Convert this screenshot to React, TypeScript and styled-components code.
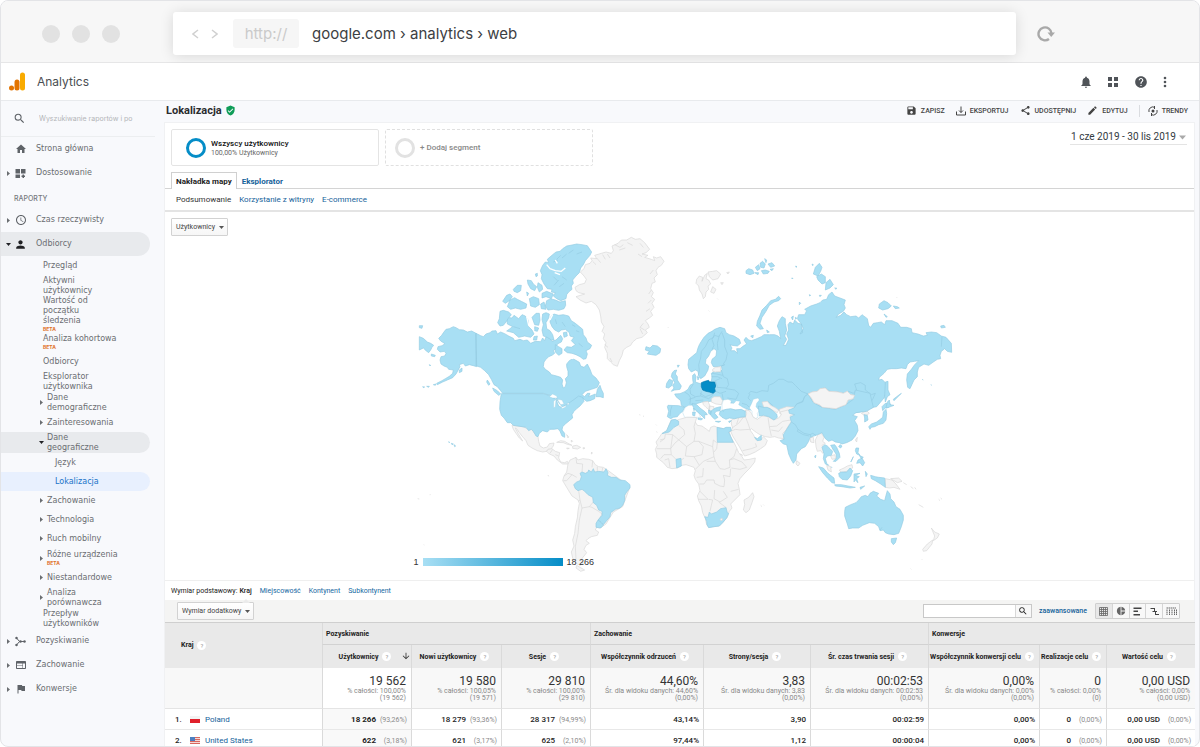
import React from "react";
import styled, { createGlobalStyle } from "styled-components";
import {
  MdNotifications, MdHelp, MdSave, MdShare, MdEdit, MdHome, MdPerson, MdSchedule,
  MdFlag, MdWeb, MdSearch, MdVerifiedUser, MdArrowDownward, MdPieChart,
} from "react-icons/md";

const SANS = `Inter, "Liberation Sans", sans-serif`;
const NAV = `"DejaVu Sans", "Liberation Sans", sans-serif`;
const ROBOTO = `Roboto, "Liberation Sans", sans-serif`;

const GlobalStyle = createGlobalStyle`
  * { box-sizing: border-box; }
  body { margin: 0; background: #fff; font-family: ${ROBOTO}; font-size: 8px; color: #222; }
  button, input { font: inherit; color: inherit; margin: 0; padding: 0; border: 0; background: none; }
  a { color: #15629a; text-decoration: none; }
  ul { list-style: none; margin: 0; padding: 0; }
  svg { display: block; flex: none; }
`;

const Window = styled.div`
  display: flex;
  flex-direction: column;
  height: 100vh;
  border: 1px solid #e3e4e7;
  border-radius: 8px;
  overflow: hidden;
  background: #f8f9fc;
`;

/* Browser bar */
const BrowserBar = styled.header`
  display: flex;
  align-items: center;
  flex: none;
  height: 62px;
  padding: 4px 144px 0 41px;
  background: #f7f7f7;
  border-bottom: 1px solid #e6e6e7;
`;
const Dots = styled.div`
  display: flex;
  gap: 12px;
  width: 131px;
`;
const Dot = styled.span`
  width: 18px;
  height: 18px;
  border-radius: 50%;
  background: #e2e2e2;
`;
const AddressBar = styled.div`
  flex: 1;
  display: flex;
  align-items: center;
  height: 43px;
  background: #fff;
  border-radius: 3px;
  box-shadow: 0 1px 14px rgba(0, 0, 0, 0.13);
  font-family: ${SANS};
  font-size: 15px;
`;
const Arrows = styled.div`
  display: flex;
  gap: 12px;
  padding: 0 15px 0 19px;
  color: #d0d0d0;
`;
const Scheme = styled.span`
  width: 66px;
  line-height: 29px;
  margin-right: 13px;
  border-radius: 3px;
  background: #f6f6f6;
  color: #cacaca;
  text-align: center;
`;
const Address = styled.span`
  color: #3c4043;
`;
const Reload = styled.button`
  margin-left: 21px;
  color: #a9a9a9;
`;

/* Product bar */
const ProductBar = styled.div`
  display: flex;
  align-items: center;
  flex: none;
  height: 38px;
  padding: 0 32px 0 8px;
  background: #fff;
  border-bottom: 1px solid #e8eaed;
  color: #5f6368;
`;
const ProductName = styled.span`
  flex: 1;
  margin-left: 11px;
  font-family: ${SANS};
  font-size: 12px;
  color: #4a4e52;
`;
const HeaderIcons = styled.div`
  display: flex;
  align-items: center;
  gap: 15px;
  color: #505459;
`;

const Columns = styled.div`
  display: flex;
  flex: 1;
  min-height: 0;
`;

/* Side navigation */
const Sidebar = styled.nav`
  flex: none;
  width: 163px;
  font-family: ${NAV};
  font-size: 8px;
  line-height: 10px;
  color: #6a6d71;
`;
const SearchBox = styled.label`
  display: flex;
  align-items: center;
  gap: 13px;
  width: 154px;
  height: 36px;
  padding-left: 12px;
  border-bottom: 1px solid #eceef0;
  color: #5f6368;
`;
const SearchInput = styled.input`
  width: 104px;
  font-family: ${SANS};
  font-size: 7px;
  outline: 0;
  &::placeholder { color: #b3b5b8; opacity: 1; }
`;
const MainItem = styled.a<{ $open?: boolean }>`
  display: flex;
  align-items: center;
  width: 149px;
  height: 24px;
  padding-left: 5px;
  border-radius: 0 12px 12px 0;
  background: ${(p) => (p.$open ? "#e8eaed" : "transparent")};
  color: #6a6d71;
`;
const MainIcon = styled.span<{ $open?: boolean }>`
  display: grid;
  place-items: center;
  width: 13px;
  margin: 0 9px 0 3px;
  color: ${(p) => (p.$open ? "#202124" : "#5f6368")};
`;
const SectionTitle = styled.div`
  padding: 9px 0 4px 13px;
  font-family: ${SANS};
  font-size: 7px;
  font-weight: 500;
  color: #777a7e;
`;
const subHeights = { one: 19, beta: 20, two: 21, long: 36 };
const SubItem = styled.a<{ $size: keyof typeof subHeights; $level: number; $state?: "open" | "active" }>`
  display: flex;
  align-items: center;
  gap: 3px;
  width: 149px;
  height: ${(p) => subHeights[p.$size]}px;
  padding-left: ${(p) => [42, 38, 54][p.$level]}px;
  border-radius: 0 11px 11px 0;
  background: ${(p) => (p.$state === "open" ? "#e8eaed" : p.$state === "active" ? "#e8f0fe" : "transparent")};
  color: ${(p) => (p.$state === "active" ? "#1a73c8" : "#6a6d71")};
  white-space: nowrap;
`;
const Beta = styled.small`
  display: block;
  font-family: ${SANS};
  font-size: 5px;
  line-height: 6px;
  font-weight: 700;
  color: #e0702a;
`;

/* Report */
const Report = styled.main`
  flex: 1;
  min-width: 0;
  margin-right: 4px;
  display: flex;
  flex-direction: column;
`;
const TitleBar = styled.div`
  display: flex;
  align-items: center;
  justify-content: space-between;
  flex: none;
  height: 22px;
  padding: 0 7px 2px 2px;
  border-bottom: 1px solid #f0f1f3;
`;
const Title = styled.h1`
  display: flex;
  align-items: center;
  gap: 3px;
  margin: 0;
  font-size: 11px;
  font-weight: 700;
  color: #2b2d30;
  svg { color: #0f9d58; }
`;
const Actions = styled.div`
  display: flex;
  align-items: center;
  gap: 11px;
`;
const Action = styled.button<{ $divided?: boolean }>`
  display: flex;
  align-items: center;
  gap: 4px;
  height: 12px;
  padding-left: ${(p) => (p.$divided ? 8 : 0)}px;
  border-left: ${(p) => (p.$divided ? "1px solid #dadce0" : "0")};
  font-size: 7px;
  font-weight: 500;
  color: #444;
`;
const Sheet = styled.div`
  flex: 1;
  display: flex;
  flex-direction: column;
  background: #fff;
  border-left: 1px solid #f0f1f3;
  border-right: 1px solid #f0f1f3;
`;
const SegmentRow = styled.div`
  display: flex;
  align-items: flex-start;
  gap: 6px;
  padding: 6px 7px 6px 6px;
`;
const Segment = styled.button<{ $empty?: boolean }>`
  display: flex;
  align-items: center;
  gap: 5px;
  width: 208px;
  height: 37px;
  padding-left: ${(p) => (p.$empty ? 9 : 14)}px;
  border: ${(p) => (p.$empty ? "1px dashed #e0e0e0" : "1px solid #e4e4e4")};
  border-radius: 2px;
  text-align: left;
  font-size: 8px;
  line-height: 10px;
  font-weight: 500;
  color: ${(p) => (p.$empty ? "#888" : "#111")};
  small { display: block; font-size: 7px; line-height: 8px; font-weight: 400; color: #666; }
`;
const Ring = styled.span<{ $color: string }>`
  width: 20px;
  height: 20px;
  border: 3px solid ${(p) => p.$color};
  border-radius: 50%;
`;
const DateRange = styled.button`
  display: flex;
  align-items: center;
  gap: 3px;
  margin-left: auto;
  padding: 1px 1px 0 1px;
  border-bottom: 1px solid #e4e4e4;
  font-size: 10px;
  line-height: 14px;
  color: #333a42;
`;
const Tabs = styled.div`
  display: flex;
  height: 17px;
  padding-left: 6px;
  border-bottom: 1px solid #d4d4d4;
  font-size: 8px;
  font-weight: 700;
`;
const Tab = styled.a<{ $active?: boolean }>`
  height: 17px;
  padding: 0 4px;
  line-height: 17px;
  border: 1px solid ${(p) => (p.$active ? "#d0d0d0" : "transparent")};
  border-bottom: 0;
  background: ${(p) => (p.$active ? "#fff" : "transparent")};
  color: ${(p) => (p.$active ? "#222" : "#15629a")};
`;
const SubTabs = styled.div`
  display: flex;
  gap: 8px;
  padding: 1px 0 0 11px;
  line-height: 20px;
  border-bottom: 2px solid #e4e4e4;
  a:first-child { color: #333; }
`;
const MapArea = styled.section`
  display: grid;
  grid-template-columns: 1fr auto 1fr;
  align-items: start;
  padding: 0 6px;
`;
const MenuButton = styled.button`
  display: flex;
  align-items: center;
  gap: 4px;
  padding: 0 3px 0 4px;
  height: 18px;
  border: 1px solid #d2d2d2;
  border-radius: 1px;
  background: linear-gradient(#fff, #f6f6f6);
  font-size: 7px;
  color: #444;
`;
const MapMenu = styled.div`
  padding-top: 6px;
`;
const MapBox = styled.div`
  position: relative;
  padding: 18px 0 5px;
`;
const Legend = styled.div`
  position: absolute;
  left: 14px;
  bottom: 14px;
  display: flex;
  align-items: center;
  gap: 4px;
  font-family: "Liberation Sans", Arial, sans-serif;
  font-size: 9px;
  line-height: 8px;
  color: #333;
`;
const LegendBar = styled.span`
  width: 140px;
  height: 8px;
  background: linear-gradient(90deg, #a8dff4, #058dc7);
`;
const Dimensions = styled.div`
  display: flex;
  align-items: center;
  gap: 8px;
  height: 20px;
  padding-left: 6px;
  border-top: 1px solid #efefef;
  font-size: 7px;
  a { color: #15689f; }
`;
const DimensionName = styled.span`
  display: flex;
  gap: 2px;
`;
const CurrentDimension = styled.b`
  position: relative;
  font-weight: 500;
  &::after {
    content: "";
    position: absolute;
    left: 3px;
    top: 12px;
    border: 4px solid transparent;
    border-top: 0;
    border-bottom-color: #ebebeb;
  }
`;
const TableTools = styled.div`
  display: flex;
  align-items: center;
  height: 22px;
  padding: 0 14px 0 12px;
  background: #f4f4f3;
`;
const Finder = styled.form`
  display: flex;
  margin-left: auto;
  height: 14px;
  border: 1px solid #c8c8c8;
  background: #fff;
  input { width: 91px; outline: 0; }
  button { display: grid; place-items: center; width: 16px; border-left: 1px solid #d8d8d8; background: #f8f8f8; }
`;
const Advanced = styled.a`
  margin: 0 8px 0 7px;
  font-size: 7px;
  font-weight: 500;
`;
const ViewGroup = styled.div`
  display: flex;
  width: 85px;
  height: 16px;
  border: 1px solid #cfcfcf;
  border-radius: 1px;
  background: #f8f8f8;
`;
const ViewButton = styled.button<{ $on?: boolean }>`
  display: grid;
  place-items: center;
  flex: 1;
  background: ${(p) => (p.$on ? "#e8e8e8" : "transparent")};
  color: #666;
  & + & { border-left: 1px solid #d5d5d5; }
`;

/* Data table */
const Table = styled.table`
  width: 100%;
  table-layout: fixed;
  border-collapse: separate;
  border-spacing: 0;
  border-top: 1px solid #cfcfcf;
  font-size: 8px;
  th, td { padding: 0; border-left: 1px solid #dadada; }
  tr > :first-child[data-name] { border-left: 0; }
`;
const GroupHead = styled.th`
  && { padding-left: 3px; }
  height: 22px;
  background: #e9e9e9;
  border-bottom: 1px solid #d2d2d2;
  font-size: 7px;
  text-align: left;
`;
const NameHead = styled(GroupHead)`
  && { padding-left: 16px; }
  border-bottom-color: #e9e9e9;
`;
const MetricHead = styled.th`
  && { padding-right: 4px; }
  position: relative;
  height: 23px;
  background: #e9e9e9;
  font-size: 7px;
  white-space: nowrap;
`;
const HeadLabel = styled.span`
  display: inline-flex;
  align-items: center;
  gap: 4px;
`;
const SortMark = styled.span`
  position: absolute;
  right: 0;
  top: 6px;
  color: #333;
`;
const Hint = styled.span`
  width: 9px;
  height: 9px;
  border-radius: 50%;
  background: #fff;
  font-size: 6px;
  line-height: 9px;
  font-weight: 400;
  text-align: center;
  color: #999;
`;
const TotalCell = styled.td<{ $sorted?: boolean }>`
  && { padding: 6px 5px 5px 0; }
  height: 41px;
  background: ${(p) => (p.$sorted ? "#fff" : "#f8f8f8")};
  border-bottom: 1px solid #e4e4e4;
  text-align: right;
  vertical-align: top;
  font-size: 12px;
  line-height: 14px;
  color: #333;
  white-space: nowrap;
  small { display: block; font-size: 7px; line-height: 7px; color: #888; }
`;
const NameCell = styled.td`
  && { padding-left: 10px; }
  height: 21px;
  border-bottom: 1px solid #e8e8e8;
  background: #fff;
`;
const NameLine = styled.span`
  display: grid;
  grid-template-columns: 15px 10px auto;
  align-items: center;
  font-weight: 500;
  a { margin-left: 5px; font-weight: 400; }
`;
const ValueCell = styled.td<{ $sorted?: boolean }>`
  && { padding-right: 4px; }
  height: 21px;
  background: ${(p) => (p.$sorted ? "#f9f9f9" : "#fff")};
  border-bottom: 1px solid #e8e8e8;
  text-align: right;
  font-weight: ${(p) => (p.$sorted ? 700 : 500)};
  white-space: nowrap;
`;
const Share = styled.span`
  display: inline-block;
  width: 31px;
  font-size: 7px;
  font-weight: 400;
  color: #8a8a8a;
`;

const Caret = ({ dir = "down", size = 5, color = "#555" }: { dir?: "down" | "right"; size?: number; color?: string }) => (
  <svg width={size} height={size} viewBox="0 0 10 10" fill={color}>
    <path d={dir === "down" ? "M0 2H10L5 8Z" : "M2 0V10L8 5Z"} />
  </svg>
);

/* World map, drawn on a grid of three units per pixel. */
const LAND = "#a8dff4";
const LAND_EDGE = "#94cbe2";
const BLANK = "#f4f4f4";
const BLANK_EDGE = "#d8d8d8";

const WorldMap = () => (
  <svg width="560" height="345" viewBox="-30 0 1680 1035" strokeLinejoin="round" strokeWidth="2" role="img" aria-label="Mapa użytkowników według kraju">
    {/* North America */}
    <g fill={LAND} stroke={LAND_EDGE}>
      <path d="M198 310L185 303L172 306L160 300L148 299L138 293L130 290L118 296L108 298L101 307L95 316L86 325L92 333L105 341L96 347L84 350L82 358L90 366L103 364L108 370L104 378L93 380L90 390L93 402L102 408L112 412L116 418L130 420L128 430L118 439L106 446L96 452L80 460L82 464L98 456L112 450L128 443L138 432L150 410L148 404L160 400L166 408L178 404L190 407L200 410Z" />
      <path d="M28 320L40 325L52 336L62 340L71 346L66 352L62 360L56 368L48 362L40 354L28 360ZM28 287L38 287L36 295L28 293ZM64 372L76 376L74 380L64 378ZM70 464L78 462L76 466ZM50 469L58 469L56 472ZM38 470L44 471L40 473ZM58 404L62 406L60 408ZM148 420L156 414L156 424L148 428Z" />
      <path d="M198 310L212 317L220 320L228 312L240 308L246 303L258 302L262 312L272 306L284 311L296 318L310 325L314 332L330 328L340 332L352 330L362 340L376 334L392 335L398 324L404 332L408 320L418 324L426 334L438 330L452 316L458 326L454 336L442 342L438 356L430 362L434 370L426 376L416 380L408 388L402 396L400 410L406 418L418 426L424 434L440 438L452 442L458 450L456 462L460 474L466 470L469 458L466 446L474 438L474 424L470 410L470 402L478 392L488 386L496 390L508 397L512 408L522 412L532 402L540 418L546 434L558 444L568 458L562 472L544 478L526 484L516 494L524 500L532 490L540 490L536 500L556 492L554 506L540 512L530 514L520 506L500 514L486 524L470 532L460 534L448 520L436 502L420 496L400 490L278 490L272 482L262 470L252 464L244 448L236 434L224 422L212 412L200 408Z" />
      <path d="M562 478L570 466L574 478L580 490L580 503L570 500L558 500ZM232 450L240 462L236 466L230 456ZM248 474L262 482L272 492L266 496L252 484Z" />
      <path d="M412 88L428 74L438 66L450 64L458 56L470 48L486 45L500 42L516 44L532 47L545 66L540 76L526 92L520 104L512 114L508 128L498 138L488 150L490 160L484 168L486 178L476 186L470 194L468 206L452 212L440 206L430 198L436 188L424 186L426 178L412 176L402 162L394 146L396 134L391 122L398 106L406 96L416 98Z" />
      <path d="M410 212L422 206L436 210L450 216L466 212L467 226L462 236L446 241L430 238L414 240L406 228Z" />
      <path d="M424 258L432 252L446 256L460 254L476 258L484 272L496 280L506 288L518 298L520 314L528 324L532 336L545 346L540 356L528 362L532 372L528 386L520 388L510 380L498 374L486 370L472 368L462 360L470 350L484 352L496 344L484 332L492 322L480 318L478 308L466 298L454 300L446 306L434 300L426 290L420 276Z" />
      <path d="M290 262L306 264L312 256L326 266L336 254L346 258L354 270L356 290L366 300L372 312L362 322L344 318L326 322L310 308L290 303L300 296L308 290L292 282Z" />
      <path d="M270 244L280 241L296 246L304 254L294 266L288 276L280 286L270 288L263 278L268 266Z" />
      <path d="M300 210L314 203L322 208L334 214L350 222L348 234L332 238L316 234L302 238L292 230ZM278 214L290 196L300 192L307 200L298 212L286 220ZM310 178L322 166L334 166L332 182L322 188L312 184ZM352 150L364 152L370 162L380 170L374 182L362 176L354 162ZM384 158L396 166L398 178L388 186L382 172ZM396 190L410 184L430 192L424 206L408 200L396 204ZM358 206L370 200L386 206L388 224L376 232L362 228ZM392 222L402 216L408 238L394 236ZM376 132L382 130L382 138L378 140ZM350 186L356 190L352 198Z" />
      <path d="M398 252L408 248L418 252L416 264L408 278L410 296L420 302L428 314L432 330L424 330L412 322L400 318L396 300L400 284L396 268ZM366 262L378 250L388 250L390 270L386 286L374 284ZM374 290L386 294L382 304L374 302ZM436 344L446 350L456 356L456 370L446 376L436 366ZM460 308L470 306L472 318L462 322ZM372 320L382 318L380 330L370 330Z" />
      <path d="M708 350L720 354L728 346L742 348L752 356L750 368L738 376L724 374L712 372L718 364L706 360Z" />
    </g>
    <g stroke={LAND_EDGE} fill="none">
      <path d="M198 310V408M430 96L444 90M440 88L452 76M456 84L470 72M476 70L490 60M500 72L516 66M430 140L442 152M446 150L432 166M448 170L462 160M470 150L456 140M486 284L496 290M498 302L508 306M310 290L330 296M440 282L436 268M456 276L466 290M506 340L518 350" />
    </g>
    <g fill="none" stroke="#fff" strokeWidth="4">
      <path d="M410 104L420 116L436 122L454 124L466 114M434 128L450 134M442 100L436 90M350 260L356 286L372 300M428 254L420 270M466 380L490 386" />
    </g>
    <path fill={BLANK} stroke={BLANK_EDGE} d="M495 172L508 164L524 160L529 148L522 138L511 126L522 116L526 104L540 100L546 92L542 84L560 86L554 76L574 70L588 66L604 70L610 62L606 48L624 40L634 30L650 30L664 22L676 28L690 26L704 38L710 46L719 58L708 68L696 72L714 76L704 82L724 88L734 92L730 80L740 84L752 80L762 94L754 106L744 112L738 122L742 134L732 144L736 156L726 160L722 176L730 188L724 200L734 208L726 220L732 232L722 244L728 256L718 264L706 272L714 282L718 292L706 300L712 308L696 322L680 326L668 336L662 346L650 352L640 360L636 376L628 392L622 409L610 404L602 396L592 386L592 370L584 352L588 338L580 326L584 312L576 304L582 290L574 276L572 258L568 240L558 224L544 214L528 219L510 210L498 200L524 192L506 188L498 182Z" />
    <path fill="none" stroke={BLANK_EDGE} d="M548 94L558 104M560 84L572 98M578 74L586 88M592 72L600 84M614 44L630 52L640 44M628 60L646 54M652 38L668 46M690 40L700 52M684 72L696 80M730 120L720 132M724 210L714 220M700 280L690 292L704 300M690 296L698 312M724 180L716 192M720 236L708 244M584 344L594 352M600 384L606 396" />

    {/* Central and South America, United States */}
    <g transform="translate(-30 480)">
      <g fill={BLANK} stroke={BLANK_EDGE}>
        <path d="M336 106L368 110L382 116L394 118L404 130L414 140L416 154L420 168L430 174L442 171L448 161L462 159L460 168L452 178L444 178L440 184L428 186L412 182L396 174L384 166L378 152L366 138L358 128L350 116L346 114L354 130L364 146L368 153L358 144L348 130L340 118Z" />
        <path d="M444 178L456 176L466 184L479 188L476 204L482 216L494 218L502 214L506 222L498 222L488 222L472 210L462 198L448 192L440 184ZM470 157L482 152L494 154L504 160L516 166L502 163L490 158ZM518 168L530 166L542 172L532 177L518 175ZM500 174L508 175L502 177ZM549 173L555 174L550 177ZM500 134L506 140L504 144ZM514 150L518 154L514 156ZM575 186L577 190L574 192Z" />
        <path d="M504 222L510 210L528 202L534 210L548 206L566 208L578 212L586 224L596 230L610 232L622 240L690 290L668 350L640 366L618 402L600 414L590 412L586 420L596 426L592 436L574 440L564 446L558 452L568 460L558 466L552 478L560 488L552 498L544 508L550 520L540 526L528 520L518 504L514 486L522 468L518 450L524 430L526 410L532 384L534 362L538 340L534 330L516 318L506 302L494 282L488 272L492 258L500 246L502 234ZM530 526L540 532L554 540L542 544L528 534Z" />
        <path fill="none" d="M528 202L530 220L548 222L546 246M578 212L576 232M592 230L592 244M608 234L606 244M492 258L504 250L516 254L500 272L490 272M516 254L530 262M524 292L536 302L540 330L546 354L568 350L580 336M568 350L576 352L596 364L606 372M546 354L538 390L534 430L526 470L528 508M606 372L596 390M458 178L450 190M466 194L476 198M540 330L534 334" />
      </g>
      <g fill={LAND} stroke={LAND_EDGE}>
        <path d="M304 11L430 11L446 16L454 20L468 28L476 48L484 52L500 44L520 30L536 18L548 22L552 34L540 48L530 56L522 64L516 74L518 84L508 92L496 102L488 110L486 120L494 130L494 142L486 138L480 124L474 116L462 118L450 118L442 126L428 122L418 130L414 140L408 138L400 124L394 118L386 122L378 112L366 110L340 106L332 98L322 98L312 84L304 76L299 58L300 36L302 22Z" />
        <path d="M540 250L546 246L556 250L564 246L566 240L574 246L580 236L584 246L596 244L612 246L618 236L624 248L622 256L634 262L648 262L660 270L676 272L690 284L690 294L680 306L674 316L674 332L668 346L660 354L646 358L632 368L630 380L620 392L610 404L604 398L594 390L606 376L606 364L596 360L590 346L580 338L578 322L564 314L552 302L546 298L534 302L526 296L521 284L530 276L540 272L544 260Z" />
        <path d="M594 390L604 398L610 406L602 414L588 412L588 400ZM162 164L167 168L164 170ZM154 160L160 162L156 164ZM146 155L149 157L147 158Z" />
      </g>
      <path fill="#fff" stroke={LAND_EDGE} strokeWidth="1" d="M448 20L458 12L470 18L472 24L458 24ZM461 34L468 28L466 50L461 54ZM472 28L486 30L492 42L482 44ZM484 52L500 46L496 52L486 56ZM498 42L508 38L506 44Z" />
      <path fill="none" stroke={BLANK_EDGE} d="M444 255L446 259M53 326L58 327M89 314L92 314M71 464L73 465M718 74L721 75M729 78L732 79M768 104L770 106M769 125L772 127" />
    </g>

    <g transform="translate(690 0)">
      {/* Eurasia, northern part */}
      <g fill={LAND} stroke={LAND_EDGE}>
        <path d="M144 404L146 388L158 378L170 368L174 354L178 344L184 334L192 322L204 310L216 304L224 298L240 292L254 296L258 308L268 314L282 318L298 328L302 340L292 348L276 346L270 344L276 354L272 362L284 362L292 370L290 356L300 356L310 348L320 342L312 330L318 322L326 330L334 332L346 328L364 320L372 314L388 314L404 314L414 318L422 326L418 304L412 288L418 272L426 260L436 266L436 280L440 300L434 318L440 328L430 346L438 346L446 328L440 312L446 300L444 284L450 276L460 282L464 270L474 280L484 282L488 308L480 312L490 296L484 282L472 266L476 254L494 254L500 242L494 238L512 228L530 222L540 218L548 210L560 208L566 194L576 186L584 198L600 204L616 210L612 224L616 234L610 244L596 252L588 262L602 256L612 246L620 254L632 260L648 258L656 264L666 254L682 266L686 286L692 292L700 280L712 278L724 276L734 284L738 272L756 272L774 280L782 292L800 292L814 296L816 308L834 312L850 318L862 316L858 308L874 306L890 308L904 318L918 322L934 340L935 367L922 364L914 356L904 364L900 376L902 386L892 388L880 396L866 406L852 402L836 412L832 426L832 440L822 450L810 476L803 472L800 450L802 432L814 418L824 404L836 392L824 394L810 396L802 404L798 416L784 414L770 416L754 416L742 418L732 430L718 442L716 450L726 448L736 458L742 470L738 490L732 504L722 516L710 530L700 532L660 546L560 556L470 544L440 544L400 536L366 536L330 540L304 532L290 524L246 510L212 514L186 516L160 524L134 532L124 526L122 512L108 500L104 492L120 491L134 485L144 478L150 466L160 460L158 448L158 436L164 431L168 440L166 456L184 462L200 456L214 454L216 440L214 430L224 424L240 428L246 418L244 408L254 404L236 410L220 410L214 398L216 388L228 378L230 362L222 356L212 364L206 378L198 388L196 400L206 408L204 420L194 438L182 446L176 436L174 424L166 420L154 426L146 416Z" />
        <path d="M82 530L84 526L116 527L134 532L128 544L118 552L112 560L100 562L92 566L82 560L86 544Z" />
        <path d="M350 288L352 274L360 256L366 240L380 226L392 212L406 208L416 199L422 206L416 212L402 216L388 226L378 244L366 262L360 280L370 296L360 298ZM380 300L388 306L382 308ZM332 318L340 316L338 324Z" />
        <path d="M520 132L526 112L538 100L546 112L542 124L534 138ZM530 140L544 132L556 140L556 158L546 162L534 150ZM558 158L570 148L580 164L570 174L556 180ZM584 174L590 174L588 178ZM516 102L520 104L518 107ZM467 108L471 110L468 112ZM455 144L459 145L457 147ZM538 196L544 196L540 200ZM508 194L512 196L509 198ZM478 216L482 220L478 224Z" />
        <path d="M318 122L326 116L338 120L342 130L330 134L318 130ZM346 112L356 104L360 116L352 122ZM360 100L368 94L376 102L372 114L362 112ZM374 86L380 90L378 98ZM384 102L396 98L404 108L392 112ZM344 128L356 128L354 134ZM364 122L376 120L388 124L384 130L370 132ZM390 118L400 116L396 122Z" />
        <path d="M718 222L732 212L744 218L754 228L744 236L728 240L716 234ZM760 228L772 230L778 234L766 236ZM732 252L742 260L738 262ZM902 288L912 286L916 292L904 294ZM454 262L460 258L458 270ZM466 262L470 264L467 268Z" />
        <path d="M96 430L102 422L110 420L106 432L112 440L112 450L120 462L124 468L120 478L104 480L94 484L102 474L98 466L104 458L98 446L94 440ZM80 460L88 448L98 452L96 466L86 474L78 472ZM112 406L118 406L114 412ZM172 440L178 442L174 450Z" />
        <path d="M736 456L744 454L744 480L750 494L742 500L736 516L734 500ZM760 508L770 500L784 490L782 492L762 512ZM736 520L752 522L746 532L736 534L728 542L726 530ZM846 448L850 450M872 464L876 466" />
      </g>
      <g fill="none" stroke={LAND_EDGE}>
        <path d="M174 440L178 422L176 404L182 384L184 364L196 350L206 330L220 322L224 308M216 358L222 346L216 328L224 316L236 320L246 304M234 360L232 340L238 316M246 308L254 330L254 350L262 370L258 390L250 402M244 420L250 440L262 446L266 464L258 476L284 480L296 490L288 508L262 504M214 440L232 440L246 446M216 430L230 432L248 436M226 452L240 446M230 472L258 474M228 484L240 490L258 484M226 452L232 470M246 490L250 510M160 462L150 478L152 492L166 500L182 498L184 484M134 486L146 494L152 504L150 520L156 526M146 508L166 502M180 490L196 500L220 492M182 498L206 506L218 496M166 512L190 510M326 492L332 484L350 488L366 482L384 484L386 466L400 460L416 448L430 448L444 456L456 456L466 466L484 484L504 492L494 500L488 514L470 522L466 534L446 540L410 540L400 528L386 516L370 518M504 492L516 486L532 484L540 476L556 474L570 484L594 486L610 490L626 484L640 490L650 480L644 462L662 458L676 466L676 480L694 494L706 490L698 508L688 520L690 530M330 492L324 504L332 512M906 320L904 350M306 520L320 524L330 534M96 528L92 540L90 558" />
      </g>
      <g fill={BLANK} stroke={BLANK_EDGE}>
        <path d="M504 492L516 486L532 484L540 476L556 474L566 484L594 486L610 490L622 484L632 494L644 496L640 506L624 510L618 524L602 530L588 536L568 534L548 532L538 524L522 518L514 504Z" />
        <path d="M218 418L226 412L242 410L242 424L226 426L218 424ZM214 506L222 500L240 500L248 512L244 524L228 522L214 516Z" />
        <path d="M188 516L204 514L210 528L208 540L198 532L190 524ZM208 528L222 530L220 544L212 552L206 542Z" />
        <path d="M366 516L382 514L392 526L404 532L416 540L412 548L400 542L388 534L372 534ZM418 538L440 530L466 532L462 540L444 546L432 552L420 552Z" />
        <path d="M170 148L178 138L188 142L186 154L194 136L202 130L198 146L206 150L212 162L204 168L206 178L198 186L196 200L190 206L186 192L178 180L176 168L168 160ZM204 126L218 124L230 122L242 132L234 146L218 150L208 140ZM218 170L228 178L222 190L212 186ZM242 158L250 158L246 164ZM260 128L268 126L264 132ZM232 206L234 208M206 242L208 244M84 292L86 294M770 202L772 204" />
      </g>
      <path fill="#fff" stroke={LAND_EDGE} strokeWidth="1" d="M246 524L250 510L264 508L274 512L272 520L282 520L288 512L300 514L296 524L308 532L320 538L316 544L296 540L276 538L258 540L246 540ZM334 522L340 508L354 504L358 510L350 520L348 530L358 542L352 550L354 562L346 566L336 558L336 544L328 534Z" />
      <path fill="#058dc7" stroke="#0679ad" d="M184 458L194 454L206 451L208 456L224 456L227 468L224 476L226 484L220 490L208 486L198 484L188 480L184 470Z" />
    </g>

    <g transform="translate(690 450)">
      {/* Mediterranean, Africa, southern Asia and Oceania */}
      <path fill="#fff" stroke={LAND_EDGE} strokeWidth="1" d="M136 82L146 76L160 76L166 88L176 98L182 112L134 112L128 98Z" />
      <g fill={BLANK} stroke={BLANK_EDGE}>
        <path d="M94 120L108 122L118 118L140 112L156 112L170 113L166 126L172 136L186 138L200 148L208 154L212 142L222 138L232 142L250 146L268 144L274 152L268 156L272 170L280 184L290 204L296 218L306 230L312 240L328 238L346 234L344 246L330 264L312 282L300 296L294 310L298 328L300 344L284 360L272 372L276 384L268 394L262 412L250 426L238 438L222 440L206 442L200 434L196 416L188 398L184 378L176 362L172 348L180 332L176 312L166 298L162 286L166 272L162 262L150 258L138 254L126 256L112 264L96 266L82 262L70 248L60 240L50 232L50 222L46 208L52 196L48 186L58 172L66 160L80 152L86 138Z" />
        <path d="M338 338L342 350L336 368L328 390L318 398L310 390L314 374L312 360L326 352Z" />
        <path d="M274 120L290 114L316 112L320 100L316 90L328 92L334 100L340 112L352 118L366 108L384 110L400 120L416 114L424 104L420 96L444 90L462 92L464 102L450 108L456 122L446 136L438 150L428 160L432 176L416 174L404 170L390 172L376 170L360 164L350 158L334 146L330 150L340 164L348 180L364 178L370 170L382 182L376 196L362 206L346 216L328 224L314 228L308 218L298 200L288 184L278 168L272 154L278 144L274 132Z" />
        <path d="M526 180L534 164L544 160L552 172L548 184L556 190L546 196L552 214L548 220L542 212L532 214L528 200ZM510 172L520 172L522 188L512 186ZM470 242L480 250L474 258L468 252ZM572 228L584 224L588 236L576 238ZM598 270L612 264L622 258L636 254L638 264L620 274L604 278ZM560 256L572 260L574 276L564 270ZM736 296L756 300L768 312L780 328L762 322L748 324L736 322ZM752 296L776 294L786 304L772 308ZM646 180L652 172L650 186ZM664 100L680 92L688 100L678 106L670 104ZM300 222L308 226ZM576 206L584 210L580 204Z" />
        <path d="M874 444L884 456L898 462L892 474L880 482L884 468ZM878 480L876 492L860 512L850 514L848 508L862 492ZM790 308L800 314M812 320L820 326M824 322L828 328M836 374L850 382M896 358L900 362M902 354L906 358M362 376L366 380M370 374L372 376M846 538V540M812 566L814 568" />
        <path fill="none" d="M116 136L132 150L134 164L104 190L92 206L98 164L76 162L74 176L60 180M98 164L140 200L162 184L166 160L162 140L166 126M140 200L136 228L162 230L178 256M162 184L176 184L218 200L220 180L230 188M176 184L190 200L186 224L162 230M218 200L222 230L190 244L166 268M222 230L226 244L240 266L254 268L270 262L268 240L282 230L290 206M232 188L230 206L222 216M268 240L282 236L306 246L320 262L300 268L274 264M272 266L270 290L250 286L254 300L252 320L240 318L224 310L222 300L200 300L192 312L178 312M190 264L188 290L170 292M226 244L200 244M178 332L204 358L174 358M206 358L218 360L214 376L210 394M224 330L222 356L240 366L262 352L250 334M296 328L272 334M236 366L260 384M50 206L92 206M92 206L94 224L72 224L62 236M74 240L86 236L90 262M94 224L108 238M124 240L132 234M74 176L60 186M272 154L286 148L300 150M290 132L296 114M276 144L296 130L310 112M300 150L330 148M316 110L324 130L330 148M308 212L334 206L350 200L346 190M384 112L388 140L394 168M388 140L410 138L428 124L452 120M394 150L416 154L428 140" />
      </g>
      <g fill={LAND} stroke={LAND_EDGE}>
        <path d="M94 120L106 118L116 124L116 134L102 142L88 156L66 161L80 152L86 138Z" />
        <path d="M231 142L250 146L258 142L272 142L274 152L266 156L280 187L232 187Z" />
        <path d="M108 238L123 235L124 258L110 264Z" />
        <path d="M194 410L204 412L208 396L214 402L230 396L242 386L258 383L262 398L266 400L260 414L248 428L238 438L222 440L206 443L201 434L200 424Z" />
        <path d="M240 94L258 88L272 86L286 90L304 88L316 94L316 110L300 112L284 116L268 114L258 118L246 112L238 104ZM266 124L274 122L268 128Z" />
        <path d="M156 70L170 74L180 84L196 96L202 104L194 104L194 116L188 110L180 102L168 92L160 82ZM174 114L188 116L184 120L174 118ZM158 96L166 96L164 108L158 106ZM160 84L164 88L162 92ZM214 92L226 84L242 80L240 92L228 94L224 100L234 112L224 118L216 110L210 102ZM226 124L242 124L236 127ZM206 90L214 94L212 104L206 100Z" />
        <path d="M355 78L370 82L382 82L396 90L410 102L412 112L402 120L386 110L370 106L358 108Z" />
        <path d="M344 172L352 176L364 166L364 180L352 182Z" />
        <path d="M446 90L462 84L470 72L488 66L494 50L504 42L520 68L546 82L586 88L618 74L640 58L646 30L690 40L700 82L680 94L662 96L648 98L638 106L652 110L644 122L652 136L654 152L646 168L636 180L620 188L606 192L598 188L586 186L576 180L566 184L556 176L546 158L528 166L510 172L506 184L496 200L484 206L470 222L468 240L460 250L454 240L446 222L440 194L430 192L420 182L432 178L430 164L440 148L454 126L450 112L464 104L448 100Z" />
        <path d="M600 194L606 198L602 204L596 200ZM546 202L554 194L562 198L570 206L578 214L574 226L562 228L556 236L560 250L566 256L556 252L550 236L552 222ZM572 196L584 194L590 202L598 220L600 232L588 244L580 244L590 234L588 222L578 206Z" />
        <path d="M536 260L550 264L564 280L582 294L584 310L576 308L562 294L548 278ZM584 314L604 314L624 318L646 322L630 324L606 320L586 318ZM596 280L604 276L620 276L630 264L638 272L632 288L622 300L606 298L598 290ZM642 282L660 280L646 286L658 290L650 296L654 308L646 300L642 306ZM660 322L674 318L662 328ZM692 286L706 290L716 292L734 294L736 322L722 312L706 302L694 296ZM676 274L682 282L678 290ZM648 204L656 204L654 218L660 226L650 222L646 212ZM654 240L666 234L674 248L668 258L660 248L650 250ZM640 230L634 244L632 246ZM658 226L670 232L664 236ZM524 228L528 226L526 234ZM574 260L576 264" />
        <path d="M672 104L682 106L684 120L674 126L674 114ZM686 140L694 132L710 126L718 120L728 112L730 96L738 88L740 100L738 120L730 130L716 134L704 140L694 142L690 148ZM742 66L748 60L750 74L762 76L746 82L738 84Z" />
        <path d="M614 394L616 382L632 374L648 368L656 360L664 350L676 346L684 350L690 340L700 334L716 340L710 348L722 358L734 362L738 346L742 332L750 342L752 356L762 366L768 380L780 388L790 406L790 420L784 440L776 460L762 464L746 462L736 458L730 450L720 452L716 440L704 430L688 428L668 436L656 444L638 444L626 446L622 432L614 408ZM754 476L770 474L766 488L760 494L754 486Z" />
      </g>
      <path fill={BLANK} stroke={BLANK_EDGE} d="M240 418L246 414L248 420L243 422ZM504 42L516 36L532 34L540 26L556 24L566 34L594 36L610 40L622 34L632 44L644 46L640 56L624 60L618 74L602 80L588 86L568 84L548 82L538 74L522 68L514 54Z" />
      <path fill="none" stroke={LAND_EDGE} d="M454 126L466 134L474 148L492 160L510 164L514 172M474 148L472 154L490 164L508 168M528 166L518 160L510 164M720 450L726 442M250 94V96" />
    </g>
  </svg>
);

const AnalyticsLogo = () => (
  <svg width="17" height="19" viewBox="0 0 34 38">
    <rect x="22" y="1" width="10" height="36" rx="5" fill="#f9ab00" />
    <rect x="11" y="15" width="10" height="22" rx="5" fill="#e37400" />
    <circle cx="5" cy="32" r="5" fill="#e37400" />
  </svg>
);

const PolandFlag = () => (
  <svg width="10" height="7" viewBox="0 0 10 7"><rect width="10" height="7" fill="#f3f3f3" /><rect y="3" width="10" height="4" fill="#e0202c" /></svg>
);
const UsaFlag = () => (
  <svg width="10" height="7" viewBox="0 0 10 7">
    <rect width="10" height="7" fill="#f4d9d6" />
    <path d="M0 .5H10M0 2.5H10M0 4.5H10M0 6.5H10" stroke="#d8685f" />
    <rect width="5" height="4" fill="#4d7fc0" />
  </svg>
);

const navIcons: Record<string, React.ReactNode> = {
  home: <MdHome size={12} />,
  custom: (
    <svg width="11" height="11" viewBox="0 0 22 22" fill="currentColor"><path d="M1 2H10V11H1ZM12 2H21V11H12ZM1 13H10V20H1ZM15 13H18V15H20V18H18V20H15V18H13V15H15Z" /></svg>
  ),
  clock: <MdSchedule size={12} />,
  person: <MdPerson size={13} />,
  flow: (
    <svg width="11" height="11" viewBox="0 0 22 22" fill="none" stroke="currentColor" strokeWidth="2"><path d="M3 4L9 11L3 18M9 11H19" /><g fill="currentColor" stroke="none"><circle cx="3" cy="4" r="2.500" /><circle cx="3" cy="18" r="2.500" /><circle cx="11" cy="11" r="2.500" /><circle cx="19" cy="11" r="2.500" /></g></svg>
  ),
  web: <MdWeb size={12} />,
  flag: <MdFlag size={12} />,
};

const Main = ({ icon, label, arrow, open }: { icon: string; label: string; arrow?: boolean; open?: boolean }) => (
  <li>
    <MainItem href="#" $open={open}>
      <Caret dir={open ? "down" : "right"} color={arrow ? (open ? "#202124" : "#6a6d71") : "transparent"} />
      <MainIcon $open={open}>{navIcons[icon]}</MainIcon>
      {label}
    </MainItem>
  </li>
);

type Sub = { lines: string[]; beta?: boolean; level: number; state?: "open" | "active" };
const subs: Sub[] = [
  { lines: ["Przegląd"], level: 0 },
  { lines: ["Aktywni", "użytkownicy"], level: 0 },
  { lines: ["Wartość od", "początku", "śledzenia"], beta: true, level: 0 },
  { lines: ["Analiza kohortowa"], beta: true, level: 0 },
  { lines: ["Odbiorcy"], level: 0 },
  { lines: ["Eksplorator", "użytkownika"], level: 0 },
  { lines: ["Dane", "demograficzne"], level: 1 },
  { lines: ["Zainteresowania"], level: 1 },
  { lines: ["Dane", "geograficzne"], level: 1, state: "open" },
  { lines: ["Język"], level: 2 },
  { lines: ["Lokalizacja"], level: 2, state: "active" },
  { lines: ["Zachowanie"], level: 1 },
  { lines: ["Technologia"], level: 1 },
  { lines: ["Ruch mobilny"], level: 1 },
  { lines: ["Różne urządzenia"], beta: true, level: 1 },
  { lines: ["Niestandardowe"], level: 1 },
  { lines: ["Analiza", "porównawcza"], level: 1 },
  { lines: ["Przepływ", "użytkowników"], level: 0 },
];
const subSize = (s: Sub): keyof typeof subHeights =>
  s.lines.length === 3 ? "long" : s.lines.length === 2 ? "two" : s.beta ? "beta" : "one";

const widths = [157, 89, 90, 89, 113, 107, 118, 111, 67, 89];
const metrics = [
  { head: "Użytkownicy", total: "19 562", notes: ["% całości: 100,00%", "(19 562)"] },
  { head: "Nowi użytkownicy", total: "19 580", notes: ["% całości: 100,05%", "(19 571)"] },
  { head: "Sesje", total: "29 810", notes: ["% całości: 100,00%", "(29 810)"] },
  { head: "Współczynnik odrzuceń", total: "44,60%", notes: ["Śr. dla widoku danych: 44,60%", "(0,00%)"] },
  { head: "Strony/sesja", total: "3,83", notes: ["Śr. dla widoku danych: 3,83", "(0,00%)"] },
  { head: "Śr. czas trwania sesji", total: "00:02:53", notes: ["Śr. dla widoku danych: 00:02:53", "(0,00%)"] },
  { head: "Współczynnik konwersji celu", total: "0,00%", notes: ["Śr. dla widoku danych: 0,00%", "(0,00%)"] },
  { head: "Realizacje celu", total: "0", notes: ["% całości: 0,00%", "(0)"] },
  { head: "Wartość celu", total: "0,00 USD", notes: ["% całości: 0,00%", "(0,00 USD)"] },
];
const rows = [
  { name: "Poland", flag: <PolandFlag />, cells: [["18 266", "(93,26%)"], ["18 279", "(93,36%)"], ["28 317", "(94,99%)"], ["43,14%"], ["3,90"], ["00:02:59"], ["0,00%"], ["0", "(0,00%)"], ["0,00 USD", "(0,00%)"]] },
  { name: "United States", flag: <UsaFlag />, cells: [["622", "(3,18%)"], ["621", "(3,17%)"], ["625", "(2,10%)"], ["97,44%"], ["1,12"], ["00:00:04"], ["0,00%"], ["0", "(0,00%)"], ["0,00 USD", "(0,00%)"]] },
];

const views: [string, React.ReactNode][] = [
  ["Tabela", <svg key="t" width="9" height="9" viewBox="0 0 18 18" fill="none" stroke="currentColor" strokeWidth="1.6"><path d="M1 1H17V17H1ZM1 5H17M1 9H17M1 13H17M5 1V17M9 1V17M13 1V17" /></svg>],
  ["Procenty", <MdPieChart key="p" size={10} />],
  ["Skuteczność", <svg key="s" width="9" height="9" viewBox="0 0 18 18" fill="#444"><path d="M1 1H17V4H1ZM1 7H10V10H1ZM1 14H14V17H1Z" /></svg>],
  ["Porównanie", <svg key="c" width="9" height="9" viewBox="0 0 18 18" fill="#444"><path d="M1 2H10V4H1ZM8 2H10V10H8ZM5 8H14V10H5ZM10 8H12V16H10ZM10 14H18V16H10Z" /></svg>],
  ["Przestawna", <svg key="x" width="11" height="9" viewBox="0 0 22 18" fill="none" stroke="currentColor" strokeWidth="2" strokeDasharray="3 1"><path d="M1 2H21M2 5V17M7 5V17M12 5V17M17 5V17M21 5V17" /></svg>],
];

export default function App() {
  return (
    <>
      <GlobalStyle />
      <Window>
        <BrowserBar>
          <Dots><Dot /><Dot /><Dot /></Dots>
          <AddressBar>
            <Arrows>
              <svg width="7" height="10" viewBox="0 0 7 10" fill="none" stroke="currentColor" strokeWidth="1.5"><path d="M6 1L1 5L6 9" /></svg>
              <svg width="7" height="10" viewBox="0 0 7 10" fill="none" stroke="currentColor" strokeWidth="1.5"><path d="M1 1L6 5L1 9" /></svg>
            </Arrows>
            <Scheme>http://</Scheme>
            <Address>google.com › analytics › web</Address>
          </AddressBar>
          <Reload aria-label="Odśwież">
            <svg width="18" height="17" viewBox="0 0 18 17" fill="none" stroke="currentColor" strokeWidth="2.4"><path d="M12 14A6.500 6.500 0 1 1 14.500 8.500" /><path d="M10.500 7.500H18L14.200 12Z" fill="currentColor" stroke="none" /></svg>
          </Reload>
        </BrowserBar>
        <ProductBar>
          <AnalyticsLogo />
          <ProductName>Analytics</ProductName>
          <HeaderIcons>
            <MdNotifications size={14} />
            <svg width="11" height="11" viewBox="0 0 11 11" fill="currentColor"><path d="M0 1H4V5H0ZM6 1H10V5H6ZM0 7H4V11H0ZM6 7H10V11H6Z" /></svg>
            <MdHelp size={14} />
            <svg width="4" height="12" viewBox="0 0 4 12" fill="currentColor"><circle cx="2" cy="2" r="1.300" /><circle cx="2" cy="6" r="1.300" /><circle cx="2" cy="10" r="1.300" /></svg>
          </HeaderIcons>
        </ProductBar>
        <Columns>
          <Sidebar>
            <SearchBox>
              <MdSearch size={13} />
              <SearchInput aria-label="Wyszukiwanie raportów" placeholder="Wyszukiwanie raportów i po" />
            </SearchBox>
            <ul>
              <Main icon="home" label="Strona główna" />
              <Main icon="custom" label="Dostosowanie" arrow />
            </ul>
            <SectionTitle>RAPORTY</SectionTitle>
            <ul>
              <Main icon="clock" label="Czas rzeczywisty" arrow />
              <Main icon="person" label="Odbiorcy" arrow open />
              {subs.map((s) => (
                <li key={s.lines.join()}>
                  <SubItem href="#" $size={subSize(s)} $level={s.level} $state={s.state}>
                    {s.level === 1 && <Caret size={5} dir={s.state ? "down" : "right"} color={s.state ? "#202124" : "#6a6d71"} />}
                    <span>
                      {s.lines.map((l, i) => <React.Fragment key={l}>{i > 0 && <br />}{l}</React.Fragment>)}
                      {s.beta && <Beta>BETA</Beta>}
                    </span>
                  </SubItem>
                </li>
              ))}
              <Main icon="flow" label="Pozyskiwanie" arrow />
              <Main icon="web" label="Zachowanie" arrow />
              <Main icon="flag" label="Konwersje" arrow />
            </ul>
          </Sidebar>
          <Report>
            <TitleBar>
              <Title>Lokalizacja <MdVerifiedUser size={11} /></Title>
              <Actions>
                <Action><MdSave size={11} />ZAPISZ</Action>
                <Action>
                  <svg width="10" height="10" viewBox="0 0 20 20" fill="none" stroke="currentColor" strokeWidth="2"><path d="M10 1V13M6 9L10 13L14 9M1 11V18H19V11" /></svg>
                  EKSPORTUJ
                </Action>
                <Action><MdShare size={11} />UDOSTĘPNIJ</Action>
                <Action><MdEdit size={11} />EDYTUJ</Action>
                <Action $divided>
                  <svg width="10" height="10" viewBox="0 0 20 20" fill="none" stroke="currentColor" strokeWidth="2"><path d="M2 12A8 8 0 0 1 13 2.500M18 8A8 8 0 0 1 7 17.500" /><path d="M13 0V6M7 14V20" /><circle cx="10" cy="10" r="3" fill="currentColor" stroke="none" /></svg>
                  TRENDY
                </Action>
              </Actions>
            </TitleBar>
            <Sheet>
              <SegmentRow>
                <Segment><Ring $color="#058dc7" /><span>Wszyscy użytkownicy<small>100,00% Użytkownicy</small></span></Segment>
                <Segment $empty><Ring $color="#e2e2e2" />+ Dodaj segment</Segment>
                <DateRange>1 cze 2019 - 30 lis 2019 <Caret size={7} color="#aaa" /></DateRange>
              </SegmentRow>
              <Tabs>
                <Tab href="#" $active>Nakładka mapy</Tab>
                <Tab href="#">Eksplorator</Tab>
              </Tabs>
              <SubTabs>
                <a href="#">Podsumowanie</a>
                <a href="#">Korzystanie z witryny</a>
                <a href="#">E-commerce</a>
              </SubTabs>
              <MapArea>
                <MapMenu><MenuButton>Użytkownicy <Caret /></MenuButton></MapMenu>
                <MapBox>
                  <WorldMap />
                  <Legend>1<LegendBar />18 266</Legend>
                </MapBox>
              </MapArea>
              <Dimensions>
                <DimensionName>
                  <span>Wymiar podstawowy:</span>
                  <CurrentDimension>Kraj</CurrentDimension>
                </DimensionName>
                <a href="#">Miejscowość</a>
                <a href="#">Kontynent</a>
                <a href="#">Subkontynent</a>
              </Dimensions>
              <TableTools>
                <MenuButton>Wymiar dodatkowy <Caret /></MenuButton>
                <Finder>
                  <input type="text" aria-label="Szukaj w tabeli" />
                  <button type="button" aria-label="Szukaj"><MdSearch size={10} /></button>
                </Finder>
                <Advanced href="#">zaawansowane</Advanced>
                <ViewGroup>
                  {views.map(([name, icon], i) => <ViewButton key={name} $on={i === 0} aria-label={name}>{icon}</ViewButton>)}
                </ViewGroup>
              </TableTools>
              <Table>
                <colgroup>{widths.map((w, i) => <col key={i} width={w} />)}</colgroup>
                <thead>
                  <tr>
                    <NameHead data-name rowSpan={2}><HeadLabel>Kraj <Hint>?</Hint></HeadLabel></NameHead>
                    <GroupHead colSpan={3}>Pozyskiwanie</GroupHead>
                    <GroupHead colSpan={3}>Zachowanie</GroupHead>
                    <GroupHead colSpan={3}>Konwersje</GroupHead>
                  </tr>
                  <tr>
                    {metrics.map((m, i) => (
                      <MetricHead key={m.head}>
                        <HeadLabel>{m.head} <Hint>?</Hint></HeadLabel>
                        {i === 0 && <SortMark><MdArrowDownward size={10} /></SortMark>}
                      </MetricHead>
                    ))}
                  </tr>
                </thead>
                <tbody>
                  <tr>
                    <TotalCell data-name />
                    {metrics.map((m, i) => (
                      <TotalCell key={m.head} $sorted={i === 0}>
                        {m.total}
                        {m.notes.map((n) => <small key={n}>{n}</small>)}
                      </TotalCell>
                    ))}
                  </tr>
                  {rows.map((r, i) => (
                    <tr key={r.name}>
                      <NameCell data-name><NameLine>{i + 1}.{r.flag}<a href="#">{r.name}</a></NameLine></NameCell>
                      {r.cells.map(([value, share], c) => (
                        <ValueCell key={c} $sorted={c === 0}>{value}{share && <Share>{share}</Share>}</ValueCell>
                      ))}
                    </tr>
                  ))}
                </tbody>
              </Table>
            </Sheet>
          </Report>
        </Columns>
      </Window>
    </>
  );
}
